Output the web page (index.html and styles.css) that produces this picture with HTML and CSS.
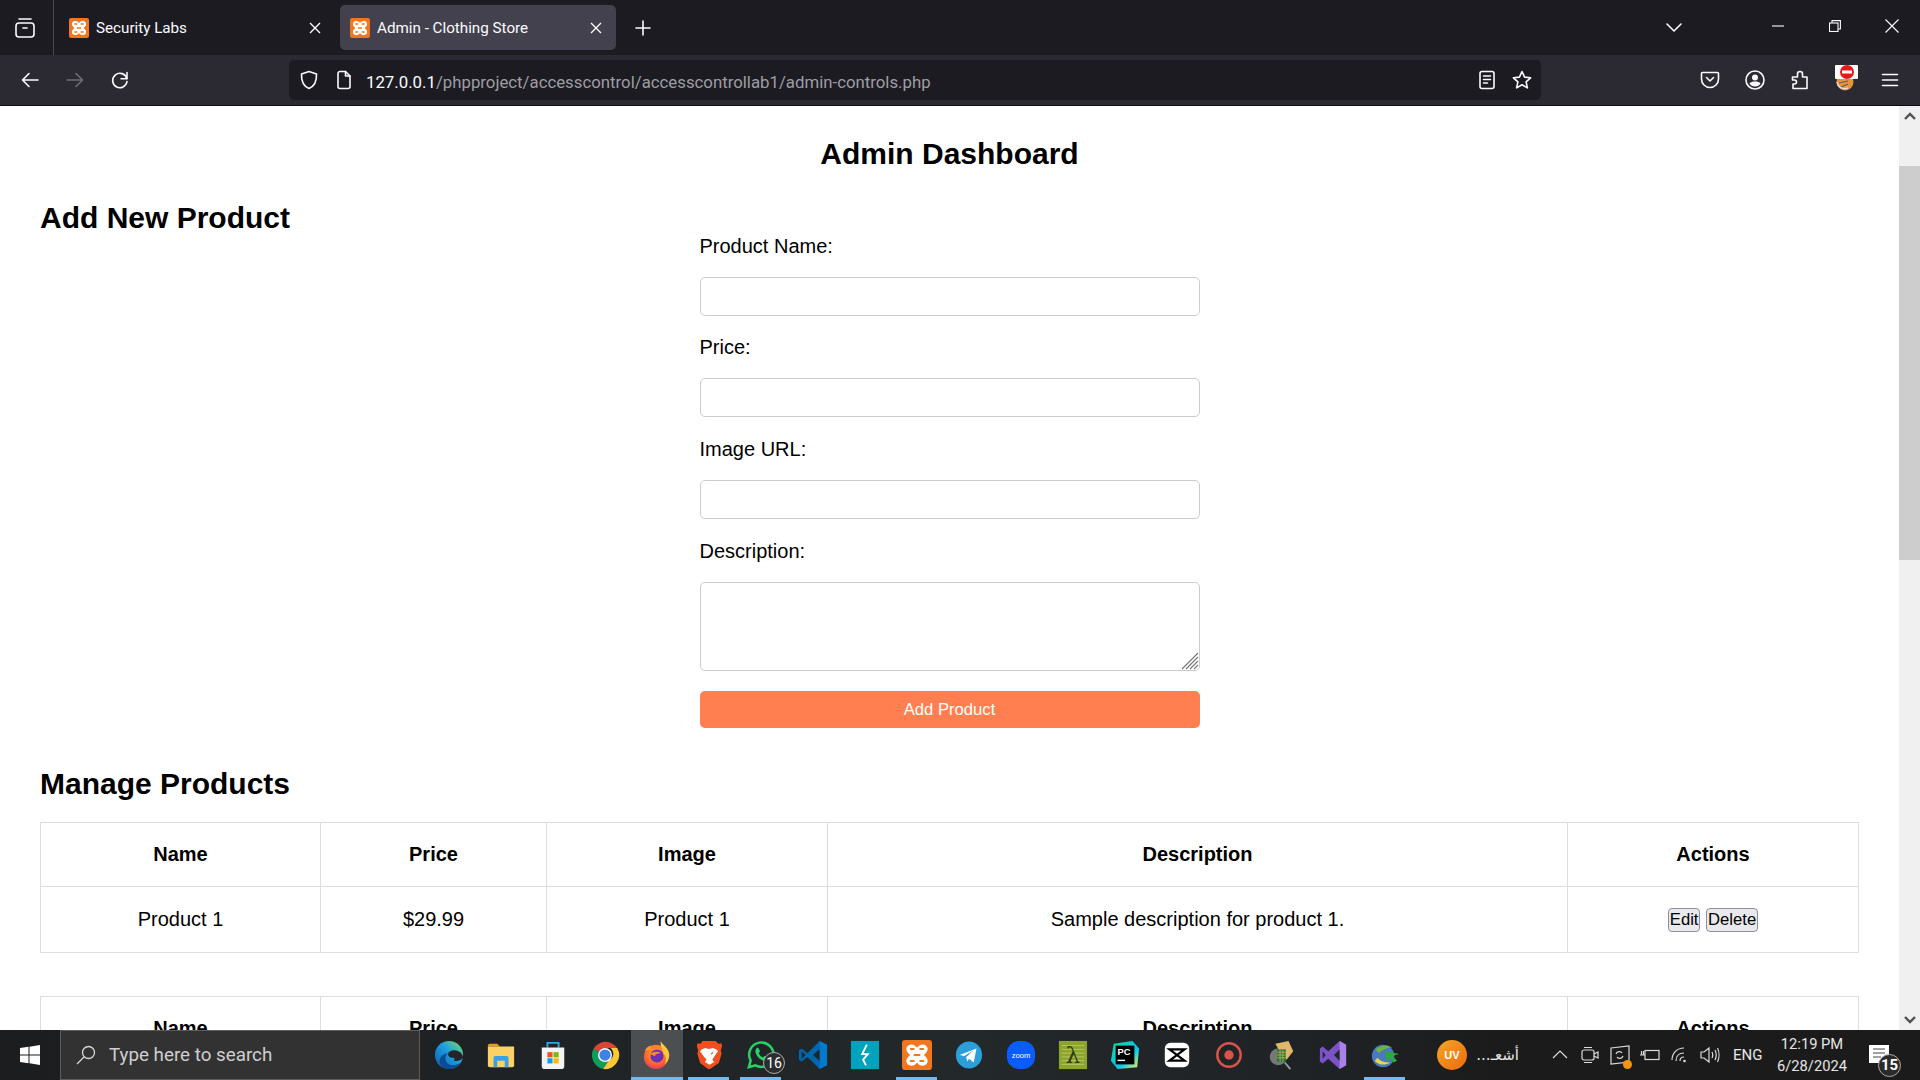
FILE: index.html
```html
<!DOCTYPE html>
<html lang="en">
<head>
    <meta charset="UTF-8">
    <title>Admin - Clothing Store</title>
    <link rel="stylesheet" href="styles.css">
</head>
<body>
    <svg class="svg-defs" aria-hidden="true">
        <defs>
            <linearGradient id="edgeGrad" x1="0" y1="1" x2="1" y2="0">
                <stop offset="0" stop-color="#0c59a4"/><stop offset=".55" stop-color="#1b9de2"/><stop offset="1" stop-color="#7fe05c"/>
            </linearGradient>
            <radialGradient id="foxGrad" cx=".5" cy=".35" r=".75">
                <stop offset="0" stop-color="#ffb02e"/><stop offset=".55" stop-color="#ff6a2b"/><stop offset="1" stop-color="#e5286f"/>
            </radialGradient>
            <linearGradient id="uvGrad" x1="0" y1="0" x2="1" y2="1">
                <stop offset="0" stop-color="#f5a623"/><stop offset="1" stop-color="#ee6a0f"/>
            </linearGradient>
            <linearGradient id="pcGrad" x1="0" y1="0" x2="1" y2="1">
                <stop offset="0" stop-color="#21d789"/><stop offset=".6" stop-color="#07c3f2"/><stop offset="1" stop-color="#fcf84a"/>
            </linearGradient>
            <symbol id="xampp" viewBox="0 0 24 24">
                <rect width="24" height="24" rx="2.5" fill="#f0761f"/>
                <path fill="#fff" d="M7.5 3.5C4.5 3.5 3 6 3.6 8.2c.4 1.5 1.6 2.6 3 3.8-1.4 1.2-2.6 2.3-3 3.8-.6 2.2.9 4.7 3.9 4.7 2 0 3.4-1 4.500-2.600 1.100 1.600 2.500 2.600 4.500 2.600 3 0 4.500-2.500 3.900-4.700-.4-1.500-1.600-2.600-3-3.800 1.400-1.200 2.600-2.300 3-3.800.6-2.200-.9-4.700-3.900-4.700-2 0-3.400 1-4.500 2.600C10.900 4.500 9.500 3.500 7.500 3.500z"/>
                <path fill="none" stroke="#f0761f" stroke-width="1.600" stroke-linecap="round" d="M7 7.200h2.400M14.600 7.200H17M7 16.800h2.400M14.600 16.800H17M10 12h4"/>
            </symbol>
        </defs>
    </svg>

    <div class="window">
        <div class="tabbar">
            <div class="tabs-btn">
                <svg class="icon" viewBox="0 0 20 20"><path d="M4 1h12"/><rect x="1" y="5" width="18" height="14" rx="3"/><path d="M8 10h4"/></svg>
            </div>
            <div class="tab">
                <svg class="favicon"><use href="#xampp"/></svg>
                <span class="tab-title">Security Labs</span>
                <svg class="tab-close" viewBox="0 0 12 12"><path d="M1 1l10 10M11 1L1 11"/></svg>
            </div>
            <div class="tab tab-active">
                <svg class="favicon"><use href="#xampp"/></svg>
                <span class="tab-title">Admin - Clothing Store</span>
                <svg class="tab-close" viewBox="0 0 12 12"><path d="M1 1l10 10M11 1L1 11"/></svg>
            </div>
            <div class="new-tab">
                <svg class="icon icon-small" viewBox="0 0 16 16"><path d="M8 1v14M1 8h14"/></svg>
            </div>
            <div class="tab-menu">
                <svg class="icon icon-small" viewBox="0 0 16 10"><path d="M1 1l7 7 7-7"/></svg>
            </div>
            <div class="win-btn"><svg class="icon win-icon" viewBox="0 0 12 12"><path d="M0 6h12"/></svg></div>
            <div class="win-btn"><svg class="icon win-icon" viewBox="0 0 12 12"><rect x=".5" y="3" width="8.500" height="8.500"/><path d="M3 3V.6h8.400V9H9"/></svg></div>
            <div class="win-btn"><svg class="icon icon-close" viewBox="0 0 14 14"><path d="M.5.5l13 13M13.500.5l-13 13"/></svg></div>
        </div>

        <div class="toolbar">
            <div class="nav-btn"><svg class="icon" viewBox="0 0 20 20"><path d="M18 10H2.500M9 3.500L2.500 10 9 16.500"/></svg></div>
            <div class="nav-btn nav-off"><svg class="icon" viewBox="0 0 20 20"><path d="M2 10h15.500M11 3.500l6.500 6.500-6.500 6.500"/></svg></div>
            <div class="nav-btn"><svg class="icon" viewBox="0 0 20 20"><path d="M16.800 8.500A7.200 7.200 0 1 0 17 11.500"/><path d="M17 2.500v6.200h-6"/></svg></div>

            <div class="urlbar">
                <svg class="icon url-icon url-shield" viewBox="0 0 20 20"><path d="M10 1.500l7.500 2.500c.3 7-1.500 12-7.500 14.500C4 16 2.200 11 2.500 4z"/></svg>
                <svg class="icon url-icon url-page" viewBox="0 0 20 20"><path d="M4 3.500A2 2 0 0 1 6 1.500h5.500L16 6v10.500a2 2 0 0 1-2 2H6a2 2 0 0 1-2-2z"/><path d="M11.500 1.500V6H16"/></svg>
                <span class="url-text"><span class="url-host">127.0.0.1</span>/phpproject/accesscontrol/accesscontrollab1/admin-controls.php</span>
                <svg class="icon url-icon" viewBox="0 0 20 20"><rect x="3" y="1.500" width="14" height="17" rx="2"/><path d="M6.500 6h7M6.500 9.500h7M6.500 13h4"/></svg>
                <svg class="icon url-icon url-star" viewBox="0 0 20 20"><path d="M10 1.500l2.600 5.600 6 .7-4.500 4.100 1.300 6-5.400-3.100-5.400 3.100 1.300-6L1.400 7.800l6-.7z"/></svg>
            </div>

            <div class="tool-group">
                <div class="tool-btn"><svg class="icon" viewBox="0 0 20 20"><path d="M2.500 2.500h15a1 1 0 0 1 1 1V9a8.500 8.500 0 0 1-17 0V3.500a1 1 0 0 1 1-1z"/><path d="M6.500 7.500L10 11l3.500-3.500"/></svg></div>
                <div class="tool-btn"><svg class="icon" viewBox="0 0 20 20"><circle cx="10" cy="10" r="9"/><circle class="icon-fill" cx="10" cy="7.500" r="3"/><path class="icon-fill" d="M4.500 13.500c1-1.500 3-2 5.500-2s4.500.5 5.500 2c-1 1.800-3 3-5.500 3s-4.500-1.200-5.500-3z"/></svg></div>
                <div class="tool-btn"><svg class="icon" viewBox="0 0 20 20"><path d="M3 18.500V14h1.500a2 2 0 0 0 0-4H2.500V7h5V4a2.500 2.500 0 0 1 5 0v3H17v11.500z"/></svg></div>
                <div class="tool-btn">
                    <svg class="ext-icon" viewBox="0 0 26 26">
                        <circle cx="12" cy="17" r="8.500" fill="#e8923c"/>
                        <path d="M6 18l9-2M8 22l7-3" stroke="#57606a" stroke-width="1.200" fill="none"/>
                        <path d="M4 17c1 5 5 8 11 6" stroke="#ddd" stroke-width="1.500" fill="none"/>
                        <rect x="2" y="0" width="23" height="14" rx="1" fill="#fff"/>
                        <circle cx="14" cy="7" r="7" fill="#e8191c"/>
                        <rect x="9" y="5.500" width="10" height="3" fill="#fff"/>
                    </svg>
                </div>
                <div class="tool-btn"><svg class="icon" viewBox="0 0 20 20"><path d="M2.500 4.500h15M2.500 10h15M2.500 15.500h15"/></svg></div>
            </div>
        </div>

        <div class="viewport">
            <main class="page">
                <h1>Admin Dashboard</h1>
                <h2 class="add-title">Add New Product</h2>
                <form class="product-form">
                    <label for="name">Product Name:</label>
                    <input type="text" id="name">
                    <label for="price">Price:</label>
                    <input type="text" id="price">
                    <label for="image">Image URL:</label>
                    <input type="text" id="image">
                    <label for="description">Description:</label>
                    <div class="area-wrap">
                        <textarea id="description"></textarea>
                        <svg class="resizer" viewBox="0 0 18 18"><path d="M17 1L1 17M17 5L5 17M17 9l-8 8M17 13l-4 4"/></svg>
                    </div>
                    <button type="button" class="add-btn">Add Product</button>
                </form>

                <h2 class="manage-title">Manage Products</h2>
                <table>
                    <colgroup>
                        <col class="col-name"><col class="col-price"><col class="col-image"><col class="col-desc"><col class="col-actions">
                    </colgroup>
                    <tr><th>Name</th><th>Price</th><th>Image</th><th>Description</th><th>Actions</th></tr>
                    <tr>
                        <td>Product 1</td>
                        <td>$29.99</td>
                        <td>Product 1</td>
                        <td>Sample description for product 1.</td>
                        <td><button type="button" class="row-btn">Edit</button> <button type="button" class="row-btn">Delete</button></td>
                    </tr>
                </table>
                <table>
                    <colgroup>
                        <col class="col-name"><col class="col-price"><col class="col-image"><col class="col-desc"><col class="col-actions">
                    </colgroup>
                    <tr><th>Name</th><th>Price</th><th>Image</th><th>Description</th><th>Actions</th></tr>
                </table>
            </main>
            <div class="scrollbar">
                <div class="scroll-up"><svg class="scroll-arrow" viewBox="0 0 12 8"><path d="M1 7l5-5 5 5"/></svg></div>
                <div class="scroll-thumb"></div>
                <div class="scroll-down"><svg class="scroll-arrow" viewBox="0 0 12 8"><path d="M1 1l5 5 5-5"/></svg></div>
            </div>
        </div>

        <footer class="taskbar">
            <div class="start">
                <svg class="start-icon" viewBox="0 0 20 20"><path d="M0 3l8.500-1.200v7.700H0zM9.500 1.700L20 0v9.500H9.500zM0 10.500h8.500v7.700L0 17zM9.500 10.500H20V20L9.500 18.300z"/></svg>
            </div>
            <div class="search">
                <svg class="search-icon" viewBox="0 0 20 20"><circle cx="12.500" cy="7.500" r="6"/><path d="M8 12L1 19"/></svg>
                <span>Type here to search</span>
            </div>
            <div class="apps">
                <div class="app"><svg class="app-icon" viewBox="0 0 32 32">
                    <circle cx="16" cy="16" r="15" fill="url(#edgeGrad)"/>
                    <path fill="#0a4a96" d="M29 23c-3 4-9 5-13 3-5-3-5-9-1-12-5 0-9 4-9 9 0 2 1 4 2 5 5 5 16 4 21-5z"/>
                    <path fill="#212628" d="M31 19c0-4-4-8-9-8-4 0-7 2-7 4.500 0 2 2 3.500 4.500 3.500 3 0 3 1.500 1.500 3 4 1 8 0 10-3z"/>
                </svg></div>
                <div class="app"><svg class="app-icon" viewBox="0 0 32 32">
                    <path fill="#e0a020" d="M2 6a2 2 0 0 1 2-2h8l3 3h-13z"/>
                    <path fill="#fad165" d="M2 7h28v20a2 2 0 0 1-2 2H4a2 2 0 0 1-2-2z"/>
                    <path fill="#3aa0e8" d="M8 29V19a2 2 0 0 1 2-2h12a2 2 0 0 1 2 2v10h-4v-7h-8v7z"/>
                </svg></div>
                <div class="app"><svg class="app-icon" viewBox="0 0 32 32">
                    <path fill="none" stroke="#28a8ea" stroke-width="2" d="M10 8V3h12v5"/>
                    <path fill="#f4f4f4" d="M4 8h24v20a3 3 0 0 1-3 3H7a3 3 0 0 1-3-3z"/>
                    <rect x="10" y="13" width="5.500" height="5.500" fill="#f25022"/><rect x="16.500" y="13" width="5.500" height="5.500" fill="#7fba00"/>
                    <rect x="10" y="19.500" width="5.500" height="5.500" fill="#00a4ef"/><rect x="16.500" y="19.500" width="5.500" height="5.500" fill="#ffb900"/>
                </svg></div>
                <div class="app"><svg class="app-icon" viewBox="0 0 32 32">
                    <path fill="#db4437" d="M3.900 9A15 15 0 0 1 29 8.500H16a7.500 7.500 0 0 0-7 4.500z"/>
                    <path fill="#0f9d58" d="M3.900 9A15 15 0 0 0 14 30.900l6.300-9.500a7.500 7.500 0 0 1-11.300-8.400z"/>
                    <path fill="#fcc934" d="M29 8.500A15 15 0 0 1 14 30.900l6.300-9.500A7.500 7.500 0 0 0 22 8.500z"/>
                    <circle cx="16" cy="16" r="7.500" fill="#fff"/><circle cx="16" cy="16" r="6" fill="#3f7fe8"/>
                </svg></div>
                <div class="app app-active"><svg class="app-icon" viewBox="0 0 32 32">
                    <circle cx="15" cy="18" r="13" fill="url(#foxGrad)"/>
                    <path fill="#ffc83a" d="M20 1c1 4 8 6 9 14 .5 5-2 9-5 11 2-4 2-9-1-12-1-4-4-8-3-13z"/>
                    <path fill="#ff9a2a" d="M3 12c1-4 4-6 7-6-1 2-1 3 0 4-3 0-5 1-7 2z"/>
                    <circle cx="16" cy="17" r="7" fill="#6c2fb5"/>
                    <path fill="#ff8a2a" d="M9 15c3-3 8-3 11-1-4 0-6 1-6 3-2 0-3-1-5-2z"/>
                </svg></div>
                <div class="app app-running"><svg class="app-icon" viewBox="0 0 32 32">
                    <path fill="#f1501e" d="M9 1h14l3 3 3-.500 1 2.500-1.500 5.500 1 3-3 10L17 31h-2l-8.500-6.500-3-10 1-3L3 6l1-2.500 3 .500z"/>
                    <path fill="#fff" d="M8 10l4-1.500 4 1 4-1 4 1.500 1.500 2-3.500 5-2.500 4 2 2.500-5 3-5-3 2-2.500L10 17l-3.500-5zM11 12l3 2-1 2zM21 12l-3 2 1 2z"/>
                </svg></div>
                <div class="app app-running">
                    <svg class="app-icon" viewBox="0 0 32 32">
                        <path fill="none" stroke="#25d366" stroke-width="2.600" d="M3 29l2-7A13 13 0 1 1 10 27z"/>
                        <path fill="#25d366" d="M11 9c1-1 2-1 2.500 0l1.500 3-1.500 2c1 2 2.500 3.500 4.500 4.500l2-1.500 3 1.500c1 .5 1 1.500 0 2.500-2 2-5 2-9-1.500S9 11 11 9z"/>
                    </svg>
                    <span class="app-badge">16</span>
                </div>
                <div class="app"><svg class="app-icon" viewBox="0 0 32 32">
                    <path fill="#0065a9" d="M23 1l8 4v22l-8 4-13-13-6 5-3-2v-10l3-2 6 5z"/>
                    <path fill="#007acc" d="M23 1v30l8-4V5z"/>
                    <path fill="#212628" d="M23 10l-7 6 7 6z"/>
                    <path fill="#212628" d="M4 12v8l4-4z"/>
                </svg></div>
                <div class="app"><svg class="app-icon" viewBox="0 0 32 32">
                    <rect x="1" y="1" width="30" height="30" fill="#00a3bd"/>
                    <path fill="none" stroke="#fff" stroke-width="2" d="M18 5l-5 10h6l-5 6 3 6"/>
                </svg></div>
                <div class="app app-running"><svg class="app-icon"><use href="#xampp"/></svg></div>
                <div class="app"><svg class="app-icon" viewBox="0 0 32 32">
                    <ellipse cx="16" cy="16" rx="14" ry="14.500" fill="#2a9fd9"/>
                    <path fill="#fff" d="M6 16l18-7-3 15-5-4-2 3-1-5 8-7-10 6z"/>
                </svg></div>
                <div class="app"><svg class="app-icon" viewBox="0 0 32 32">
                    <rect x="1" y="1" width="30" height="30" rx="13" fill="#0b5cff"/>
                    <text x="16" y="19" class="zoom-text">zoom</text>
                </svg></div>
                <div class="app"><svg class="app-icon" viewBox="0 0 32 32">
                    <rect x="1" y="1" width="30" height="30" fill="#8ca52a"/>
                    <path stroke="#b8c96c" stroke-width="1" d="M4 6h24M4 10h24M4 14h24M4 18h24M4 22h24M4 26h24"/>
                    <text x="16" y="25" class="lambda-text">λ</text>
                </svg></div>
                <div class="app"><svg class="app-icon" viewBox="0 0 32 32">
                    <path fill="url(#pcGrad)" d="M4 4l20-3 7 8-2 20-21 2-7-9z"/>
                    <rect x="6" y="6" width="20" height="20" fill="#000"/>
                    <text x="8" y="15.500" class="pc-text">PC</text>
                    <rect x="8" y="21" width="8" height="1.500" fill="#fff"/>
                </svg></div>
                <div class="app"><svg class="app-icon" viewBox="0 0 32 32">
                    <rect x="3" y="3" width="26" height="26" rx="6" fill="#fff"/>
                    <path fill="none" stroke="#000" stroke-width="2.400" d="M8 10h16L8 22h16z"/>
                </svg></div>
                <div class="app"><svg class="app-icon" viewBox="0 0 32 32">
                    <circle cx="16" cy="16" r="12.500" fill="none" stroke="#d9534a" stroke-width="2.600"/>
                    <circle cx="16" cy="16" r="5" fill="#d9534a"/>
                </svg></div>
                <div class="app"><svg class="app-icon" viewBox="0 0 32 32">
                    <path stroke="#9a9a9a" stroke-width="2" d="M20 24l6 7"/>
                    <circle cx="13" cy="18" r="9" fill="#777"/>
                    <path fill="#e0b76c" d="M10 4l14-3 5 11-7 9-7-8z"/>
                    <path fill="#0f7a2c" d="M12 10h9v13h-9z"/>
                    <path stroke="#c9a45c" stroke-width="1" d="M12 13h9M12 16h9M12 19h9M15 10v13M18 10v13"/>
                </svg></div>
                <div class="app"><svg class="app-icon" viewBox="0 0 32 32">
                    <path fill="#7c52c7" d="M23 1l7 4v22l-7 4-12-11-6 5-3-2V9l3-2 6 5z"/>
                    <path fill="#a982e6" d="M23 1v30l7-4V5z"/>
                    <path fill="#212628" d="M23 10l-6 6 6 6z"/>
                    <path fill="#212628" d="M5 12v8l3-4z"/>
                </svg></div>
                <div class="app app-running"><svg class="app-icon" viewBox="0 0 32 32">
                    <circle cx="14" cy="17" r="12" fill="#4a78c2"/>
                    <path fill="#6cb33f" d="M6 10c4-4 12-5 18-2-5 0-11 2-14 6z"/>
                    <path fill="#e8d44d" d="M5 22c3 4 10 6 17 2-6 0-11-1-14-5z"/>
                    <path fill="#2eaa3a" d="M16 12l15 3-7 2 5 5-4 2-4-5-3 5z"/>
                </svg></div>
            </div>

            <div class="tray">
                <svg class="uv-icon" viewBox="0 0 30 30">
                    <circle cx="15" cy="15" r="15" fill="url(#uvGrad)"/>
                    <text x="15" y="19" class="uv-text">UV</text>
                </svg>
                <span class="tray-news" dir="rtl">أشعـ...</span>
                <div class="tray-icons">
                    <svg class="tray-icon" viewBox="0 0 20 20"><path d="M3 13l7-7 7 7"/></svg>
                    <svg class="tray-icon" viewBox="0 0 20 20"><rect x="2" y="5" width="12" height="10" rx="2"/><path d="M14 9l4-2v6l-4-2M4 2.500h8M4 17.500h8"/></svg>
                    <span class="tray-slot">
                        <svg class="tray-icon" viewBox="0 0 20 20"><path d="M1 3l18-2v16L1 19z"/><path d="M6 9c1-3 5-3 6-1M13 11c-1 3-5 3-6 1"/></svg>
                        <span class="tray-dot"></span>
                    </span>
                    <svg class="tray-icon" viewBox="0 0 20 20"><rect x="5" y="5.500" width="14" height="9"/><path d="M0 10h5M1.500 6v4M3.500 6v4"/></svg>
                    <svg class="tray-icon" viewBox="0 0 20 20"><path d="M2 15c0-7 5-12 12-12M6 16c0-5 3-8 8-8M10 16c0-2 1-4 4-4"/><circle class="tray-fill" cx="14.500" cy="16" r="1.300"/></svg>
                    <svg class="tray-icon" viewBox="0 0 20 20"><path d="M1 7h3l5-4v14l-5-4H1zM12 7c1 2 1 4 0 6M15 5c1.500 3 1.500 7 0 10M17.500 3c2 4 2 10 0 14"/></svg>
                </div>
                <span class="tray-lang">ENG</span>
                <div class="clock">
                    <span>12:19 PM</span>
                    <span>6/28/2024</span>
                </div>
                <div class="notify">
                    <svg class="notify-icon" viewBox="0 0 20 18"><path class="notify-box" d="M0 0h20v18H0z"/><path class="notify-lines" d="M4 4h12M4 8h12M4 12h8"/></svg>
                    <span class="notify-badge">15</span>
                </div>
            </div>
        </footer>
    </div>
</body>
</html>
```

FILE: styles.css
```css
html, body {
    margin: 0;
    padding: 0;
    height: 100%;
    overflow: hidden;
}
body {
    font-family: "Liberation Sans", Arial, sans-serif;
    background-color: #fff;
    color: #000;
}
.svg-defs {
    position: absolute;
    width: 0;
    height: 0;
}
.window {
    display: flex;
    flex-direction: column;
    height: 100vh;
}

/* shared line icons */
.icon {
    width: 20px;
    height: 20px;
    fill: none;
    stroke: #fbfbfe;
    stroke-width: 1.6;
    stroke-linecap: round;
    stroke-linejoin: round;
    flex: none;
}
.icon-small {
    width: 16px;
    height: 16px;
}
.win-icon {
    width: 12px;
    height: 12px;
}
.icon-close {
    width: 14px;
    height: 14px;
    stroke-width: 1.100;
}
.icon-fill {
    fill: #fbfbfe;
    stroke: none;
}

/* tab strip */
.tabbar {
    display: flex;
    height: 55px;
    flex: none;
    background-color: #1c1b22;
    font-family: Roboto, "Noto Sans", sans-serif;
    color: #fbfbfe;
    font-size: 15.2px;
}
.tabs-btn {
    display: flex;
    align-items: center;
    justify-content: center;
    width: 53px;
    border-right: 1px solid #4a4951;
    margin-right: 5px;
}
.tabs-btn .icon {
    margin-right: 3px;
}
.tab {
    display: flex;
    align-items: center;
    width: 276px;
    height: 45px;
    margin: 5px 5px 5px 0;
    padding: 0 14px 0 10px;
    box-sizing: border-box;
    border-radius: 5px;
}
.tab-active {
    background-color: #42414d;
    margin-right: 0;
}
.favicon {
    width: 20px;
    height: 20px;
    flex: none;
}
.tab-title {
    flex: 1;
    margin-left: 7px;
    margin-top: 1px;
}
.tab-close {
    width: 12px;
    height: 12px;
    fill: none;
    stroke: #fbfbfe;
    stroke-width: 1.400;
}
.new-tab {
    display: flex;
    align-items: center;
    justify-content: center;
    width: 44px;
    margin-left: 5px;
}
.tab-menu {
    display: flex;
    align-items: center;
    justify-content: center;
    width: 44px;
    margin-left: auto;
    margin-right: 53px;
}
.win-btn {
    display: flex;
    align-items: center;
    justify-content: center;
    width: 57px;
    padding-bottom: 3px;
    box-sizing: border-box;
}
.win-btn .icon {
    stroke-width: 1.100;
    stroke-linecap: butt;
    stroke-linejoin: miter;
}

/* nav bar */
.toolbar {
    display: flex;
    align-items: center;
    height: 50px;
    flex: none;
    padding-left: 7px;
    background-color: #2b2a33;
    border-bottom: 1px solid #0c0c0d;
    font-family: Roboto, "Noto Sans", sans-serif;
}
.nav-btn {
    display: flex;
    justify-content: center;
    width: 45px;
}
.nav-off .icon {
    stroke: #6e6d75;
}
.urlbar {
    display: flex;
    align-items: center;
    width: 1252px;
    height: 40px;
    margin-left: 147px;
    padding: 0 9px;
    box-sizing: border-box;
    background-color: #1c1b22;
    border-radius: 5px;
}
.url-shield {
    margin-left: 1px;
}
.url-page {
    margin-left: 15px;
}
.url-text {
    flex: 1;
    margin-left: 12px;
    margin-top: 3px;
    font-size: 16.8px;
    color: #9e9ea4;
}
.url-host {
    color: #fbfbfe;
}
.url-star {
    margin-left: 15px;
}
.tool-group {
    display: flex;
    margin-left: auto;
    padding-right: 8px;
}
.tool-btn {
    display: flex;
    justify-content: center;
    width: 45px;
}
.ext-icon {
    width: 26px;
    height: 26px;
    margin-top: -5px;
    margin-left: 2px;
}

/* page content */
.viewport {
    display: flex;
    flex: 1;
    min-height: 0;
}
.page {
    flex: 1;
    min-width: 0;
    padding: 0 40px;
    overflow: hidden;
}
h1 {
    margin: 29px 0 0;
    font-size: 30px;
    line-height: 37px;
    text-align: center;
}
h2 {
    margin: 0;
    font-size: 30px;
    line-height: 36px;
}
.add-title {
    margin-top: 28px;
    line-height: 35px;
}
.product-form {
    width: 500px;
    margin: -0.4px auto 0;
}
.product-form label {
    display: block;
    font-size: 20px;
    line-height: 23px;
    margin-bottom: 19px;
}
.product-form input {
    display: block;
    width: 100%;
    height: 39px;
    margin-bottom: 20.67px;
    box-sizing: border-box;
    border: 1px solid #ccc;
    border-radius: 5px;
    background-color: #fff;
}
.area-wrap {
    position: relative;
    margin-bottom: 20px;
}
.product-form textarea {
    display: block;
    width: 100%;
    height: 89px;
    box-sizing: border-box;
    border: 1px solid #ccc;
    border-radius: 5px;
    resize: none;
}
.resizer {
    position: absolute;
    right: 1px;
    bottom: 1px;
    width: 18px;
    height: 18px;
    fill: none;
    stroke: #777;
    stroke-width: 1.100;
}
.add-btn {
    display: block;
    width: 100%;
    height: 37px;
    padding-top: 2px;
    border: 0;
    border-radius: 5px;
    background-color: #ff7f50;
    color: #fff;
    font-family: inherit;
    font-size: 16.67px;
}
.manage-title {
    margin-top: 38px;
    margin-bottom: 20.4px;
}
table {
    width: 100%;
    table-layout: fixed;
    border-collapse: collapse;
    margin-bottom: 43px;
    font-size: 20px;
    line-height: 23px;
}
th, td {
    border: 1px solid #ddd;
    padding: 20px;
    text-align: center;
}
.col-name { width: 280px; }
.col-price { width: 226px; }
.col-image { width: 281px; }
.col-desc { width: 740px; }
.row-btn {
    height: 24px;
    padding: 0 1px;
    border: 1px solid #8f8f9d;
    border-radius: 4px;
    background-color: #e9e9ed;
    color: #000;
    font-family: inherit;
    font-size: 16.67px;
    vertical-align: middle;
}

/* scrollbar */
.scrollbar {
    display: flex;
    flex-direction: column;
    width: 21px;
    flex: none;
    background-color: #f0f0f0;
}
.scroll-up {
    display: flex;
    justify-content: center;
    height: 60px;
    padding-top: 6px;
    box-sizing: border-box;
}
.scroll-thumb {
    height: 394px;
    background-color: #cdcdcd;
}
.scroll-down {
    display: flex;
    justify-content: center;
    align-items: flex-end;
    flex: 1;
    padding-bottom: 6px;
}
.scroll-arrow {
    width: 12px;
    height: 8px;
    fill: none;
    stroke: #505050;
    stroke-width: 2.400;
}

/* windows taskbar */
.taskbar {
    display: flex;
    align-items: stretch;
    height: 50px;
    flex: none;
    background: linear-gradient(90deg, #1c1d1e 0, #1f2224 25%, #23282b 50%, #1f2224 70%, #1b1b1b 78%);
    font-family: Roboto, "Noto Sans", sans-serif;
    color: #e6e6e6;
}
.start {
    display: flex;
    align-items: center;
    justify-content: center;
    width: 60px;
}
.start-icon {
    width: 20px;
    height: 20px;
    fill: #fff;
}
.search {
    display: flex;
    align-items: center;
    width: 360px;
    margin-right: 3px;
    padding-left: 15px;
    box-sizing: border-box;
    background-color: #323232;
    border: 1px solid #5c5c5c;
    font-size: 18.8px;
    color: #cfcfcf;
}
.search-icon {
    width: 20px;
    height: 20px;
    margin-right: 13px;
    fill: none;
    stroke: #d8d8d8;
    stroke-width: 1.300;
}
.apps {
    display: flex;
}
.app {
    position: relative;
    display: flex;
    align-items: center;
    justify-content: center;
    width: 52px;
    box-sizing: border-box;
}
.app-icon {
    width: 30px;
    height: 30px;
}
.app-active {
    background-color: #4b4f52;
    border-bottom: 3px solid #76b9ed;
}
.app-active .app-icon {
    margin-top: 3px;
}
.app-running::after {
    content: "";
    position: absolute;
    left: 5px;
    right: 6px;
    bottom: 0;
    height: 3px;
    background-color: #76b9ed;
}
.app-badge {
    position: absolute;
    left: 28px;
    top: 22px;
    width: 20px;
    height: 20px;
    border: 1px solid #aaa;
    border-radius: 50%;
    background-color: #2b2e30;
    color: #fff;
    font-size: 14px;
    line-height: 20px;
    text-align: center;
}
.zoom-text {
    fill: #fff;
    font-size: 8px;
    text-anchor: middle;
    font-family: "Liberation Sans", sans-serif;
}
.lambda-text {
    fill: #2f3a10;
    font-size: 24px;
    text-anchor: middle;
    font-family: "DejaVu Serif", serif;
}
.pc-text {
    fill: #fff;
    font-size: 10px;
    font-weight: bold;
    font-family: "Liberation Sans", sans-serif;
}
.uv-text {
    fill: #fff;
    font-size: 11px;
    font-weight: bold;
    text-anchor: middle;
    font-family: "Liberation Sans", sans-serif;
}
.tray {
    display: flex;
    align-items: center;
    flex: 1;
    padding-left: 26px;
}
.uv-icon {
    width: 30px;
    height: 30px;
    flex: none;
}
.tray-news {
    width: 42px;
    margin-left: 10px;
    font-family: "DejaVu Sans", sans-serif;
    font-size: 15px;
    white-space: nowrap;
}
.tray-icons {
    display: flex;
    margin-left: 26px;
}
.tray-icon {
    display: block;
    width: 20px;
    height: 20px;
    padding: 0 5px;
    fill: none;
    stroke: #dcdcdc;
    stroke-width: 1.200;
}
.tray-fill {
    fill: #dcdcdc;
    stroke: none;
}
.tray-slot {
    position: relative;
}
.tray-dot {
    position: absolute;
    right: 3px;
    bottom: -4px;
    width: 9px;
    height: 9px;
    border-radius: 50%;
    background-color: #f8930e;
}
.tray-lang {
    width: 32px;
    margin-left: 8px;
    font-size: 15px;
}
.clock {
    display: flex;
    flex-direction: column;
    align-items: center;
    gap: 4px;
    width: 90px;
    margin-left: 2px;
    font-size: 14.7px;
    line-height: 18px;
}
.notify {
    position: relative;
    width: 28px;
    margin-left: 12px;
    height: 100%;
}
.notify-icon {
    position: absolute;
    left: 0;
    top: 15px;
    width: 20px;
    height: 18px;
}
.notify-box {
    fill: #fff;
}
.notify-lines {
    stroke: #444;
    stroke-width: 1;
}
.notify-badge {
    position: absolute;
    left: 9px;
    top: 24px;
    width: 21px;
    height: 21px;
    border: 1px solid #aaa;
    border-radius: 50%;
    background-color: #2b2b2b;
    color: #fff;
    font-size: 15px;
    font-weight: bold;
    line-height: 21px;
    text-align: center;
}
```
